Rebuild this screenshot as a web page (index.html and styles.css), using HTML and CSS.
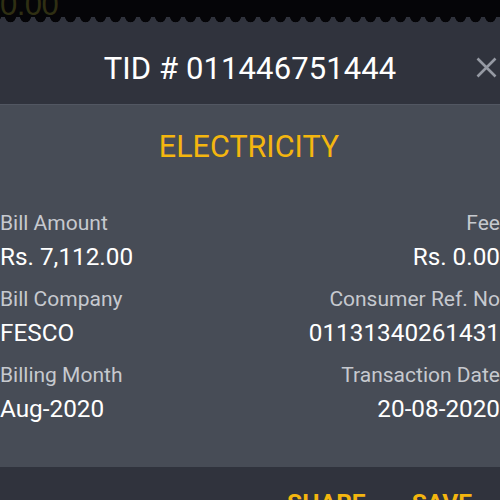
FILE: index.html
```html
<!DOCTYPE html>
<html>
<head>
<meta charset="utf-8">
<link rel="stylesheet" href="styles.css">
</head>
<body>
<div class="screen">
  <div class="top"><span class="ghost">0.00</span></div>
  <div class="header">
    <div class="scallops"></div>
    <div class="title-row">
      <span class="tid">TID # 011446751444</span>
      <svg class="close" width="21" height="21" viewBox="0 0 21 21"><path d="M1.5 1.5L19.5 19.5M19.5 1.5L1.5 19.5" stroke="#9599a3" stroke-width="2.6" fill="none"/></svg>
    </div>
  </div>
  <div class="content">
    <div class="category">ELECTRICITY</div>
    <div class="grid">
      <div class="cell"><div class="label">Bill Amount</div><div class="value">Rs. 7,112.00</div></div>
      <div class="cell right"><div class="label">Fee</div><div class="value">Rs. 0.00</div></div>
      <div class="cell"><div class="label">Bill Company</div><div class="value">FESCO</div></div>
      <div class="cell right"><div class="label">Consumer Ref. No</div><div class="value">01131340261431</div></div>
      <div class="cell"><div class="label">Billing Month</div><div class="value">Aug-2020</div></div>
      <div class="cell right"><div class="label">Transaction Date</div><div class="value">20-08-2020</div></div>
    </div>
  </div>
  <div class="footer">
    <span class="btn">SHARE</span>
    <span class="btn">SAVE</span>
  </div>
</div>
</body>
</html>
```
FILE: styles.css
```css
html, body { margin: 0; padding: 0; background: #000; }
.screen {
  width: 500px; height: 500px; overflow: hidden;
  font-family: Roboto, "Noto Sans", sans-serif;
  display: flex; flex-direction: column;
}
.top { height: 17px; flex-shrink: 0; background: #050508; overflow: hidden; }
.ghost {
  display: block; font-family: "Liberation Sans", sans-serif; font-size: 31px; line-height: 30px;
  color: #2f2f13; margin-top: -10px; margin-left: 0px; letter-spacing: -0.5px;
}
.header { background: #30333d; height: 87px; flex-shrink: 0; display: flex; flex-direction: column; }
.scallops {
  height: 7px; flex-shrink: 0;
  background: radial-gradient(circle at 50% 0, #050508 5px, rgba(0,0,0,0) 5.6px) 3px 0 / 15px 7px repeat-x;
}
.title-row {
  flex: 1; display: flex; align-items: center; justify-content: center; position: relative;
  padding-top: 8px;
}
.tid { color: #ffffff; font-size: 31px; letter-spacing: 0.1px; }
.close { position: absolute; right: 3px; top: 33px; }
.content {
  background: #474c56; height: 363px; flex-shrink: 0; border-top: 1px solid #525762;
  box-sizing: border-box;
}
.category {
  text-align: center; color: #f4b60f; font-size: 30.5px; margin-top: 24px; line-height: 36px;
  margin-left: -2px;
}
.grid {
  display: grid; grid-template-columns: 1fr 1fr; margin-top: 45px; row-gap: 12px;
}
.cell.right { text-align: right; }
.label { color: #c6c9cf; font-size: 21px; line-height: 26px; }
.value { color: #ffffff; font-size: 24.3px; line-height: 34px; margin-top: 4px; }
.footer {
  flex: 1; background: #30333d; display: flex; justify-content: flex-end; gap: 46px;
  padding-right: 28px; padding-top: 21px;
}
.btn { color: #f4b60f; font-weight: bold; font-size: 24.5px; line-height: 30px; }
```
